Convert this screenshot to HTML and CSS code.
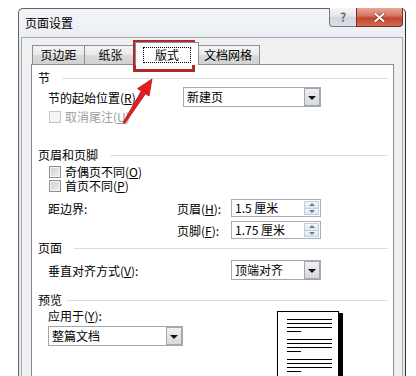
FILE: index.html
```html
<!DOCTYPE html>
<html>
<head>
    <meta charset="utf-8">
    <title>页面设置</title>
    <link rel="stylesheet" href="styles.css">
</head>
<body>
    <div class="screen">
        <div class="window">
            <div class="titlebar">
                <span class="title">页面设置</span>
                <div class="caption-buttons">
                    <span class="cap-btn help">?</span>
                    <span class="cap-btn close">
                        <svg width="11" height="9" viewBox="0 0 11 9">
                            <path d="M1.5 1 L9.5 8 M9.5 1 L1.5 8" stroke="#7a2a1e" stroke-width="3.4" stroke-linecap="round"/>
                            <path d="M1.5 1 L9.5 8 M9.5 1 L1.5 8" stroke="#fff" stroke-width="2.2" stroke-linecap="round"/>
                        </svg>
                    </span>
                </div>
            </div>

            <div class="client">
                <div class="tabs">
                    <div class="tab">页边距</div>
                    <div class="tab">纸张</div>
                    <div class="tab active"><span class="focus">版式</span></div>
                    <div class="tab">文档网格</div>
                </div>

                <div class="panel">
                    <div class="group-head">节</div>
                    <div class="row row-start">
                        <span class="label">节的起始位置(<u>R</u>)</span>
                        <div class="select select-start"><span class="value">新建页</span><span class="drop"></span></div>
                    </div>
                    <div class="check disabled check-first">
                        <span class="box"></span><span>取消尾注(<u>U</u>)</span>
                    </div>

                    <div class="group-head head-hf">页眉和页脚</div>
                    <div class="check check-odd">
                        <span class="box"></span><span>奇偶页不同(<u>O</u>)</span>
                    </div>
                    <div class="check">
                        <span class="box"></span><span>首页不同(<u>P</u>)</span>
                    </div>
                    <div class="margins">
                        <span>距边界:</span>
                        <span>页眉(<u>H</u>):</span>
                        <div class="spin"><span class="value">1.5 厘米</span><span class="arrows"><i class="up"></i><i class="down"></i></span></div>
                        <span></span>
                        <span>页脚(<u>F</u>):</span>
                        <div class="spin"><span class="value">1.75 厘米</span><span class="arrows"><i class="up"></i><i class="down"></i></span></div>
                    </div>

                    <div class="group-head head-page">页面</div>
                    <div class="row row-valign">
                        <span class="label">垂直对齐方式(<u>V</u>):</span>
                        <div class="select select-valign"><span class="value">顶端对齐</span><span class="drop"></span></div>
                    </div>

                    <div class="group-head head-preview">预览</div>
                    <div class="preview">
                        <div class="apply">
                            <div class="apply-label">应用于(<u>Y</u>):</div>
                            <div class="select select-apply"><span class="value">整篇文档</span><span class="drop"></span></div>
                        </div>
                        <div class="page">
                            <i></i><i></i><i></i><i class="short"></i>
                            <i></i><i></i><i></i><i class="short"></i>
                            <i></i><i></i><i></i><i class="short"></i>
                        </div>
                    </div>
                </div>
            </div>
        </div>

        <!-- annotation over the screenshot -->
        <div class="mark"></div>
        <svg class="arrow" width="416" height="376" viewBox="0 0 416 376">
            <polygon points="152,79 149,96 145.5,93.8 124.8,123.6 123.2,122.4 141.3,91.1 137.5,88.6" fill="#e11d1f" stroke="#b4121a" stroke-width="0.8" stroke-linejoin="round"/>
        </svg>
    </div>
</body>
</html>
```

FILE: styles.css
```css
* {
    box-sizing: border-box;
}

body {
    margin: 0;
    background-color: #fff;
    font-family: "Noto Sans CJK SC", "Noto Sans", sans-serif;
    font-size: 12px;
    color: #000;
}

u {
    text-decoration: underline;
}

.screen {
    position: relative;
    width: 416px;
    height: 376px;
    overflow: hidden;
    padding: 8px 0 0 18px;
}

.window {
    width: 388px;
    height: 400px;
    padding: 0 2px;
    border: 1px solid #5b626c;
    border-right-color: #2b2f35;
    border-bottom: none;
    border-radius: 5px 5px 0 0;
    background: linear-gradient(#f3f5f8, #e6eaef 40px);
}

.titlebar {
    height: 28px;
    display: flex;
    justify-content: space-between;
    align-items: flex-start;
}

.title {
    padding-left: 4px;
    line-height: 28px;
}

.caption-buttons {
    display: flex;
    margin-top: -1px;
}

.cap-btn {
    height: 19px;
    display: flex;
    align-items: center;
    justify-content: center;
    border: 1px solid #6f7782;
    border-top: none;
}

.help {
    width: 28px;
    border-radius: 0 0 0 4px;
    background: linear-gradient(#f6f7f9, #dfe3e8 50%, #cfd4db 51%, #dde1e6);
    color: #6b6f75;
    font-weight: bold;
    font-size: 12px;
    line-height: 14px;
}

.close {
    width: 47px;
    margin-left: -1px;
    border-color: #7a2e22;
    border-radius: 0 0 4px 0;
    background: linear-gradient(#eaa796, #d2735f 45%, #c3452e 55%, #d06a4f);
}

.client {
    height: 380px;
    padding: 4px 8px 0 9px;
    border: 1px solid #a2aab4;
    background-color: #f0f0f0;
}

.tabs {
    display: flex;
    align-items: flex-end;
    height: 22px;
    padding-left: 1px;
}

.tab {
    height: 19px;
    min-width: 53px;
    padding: 0 7px;
    border: 1px solid #8c8f96;
    border-bottom: none;
    background: linear-gradient(#f4f4f4, #e9e9e9 50%, #dadada 51%, #d2d2d2);
    line-height: 17px;
    text-align: center;
}

.tab + .tab {
    margin-left: -1px;
}

.tab.active {
    position: relative;
    z-index: 1;
    height: 23px;
    min-width: 57px;
    margin: 0 -2px -1px -2px;
    background: #fff;
    display: flex;
    align-items: center;
    justify-content: center;
    padding-top: 2px;
}

.focus {
    padding: 0 11px;
    border: 1px dotted #000;
    line-height: 14px;
}

.panel {
    height: 330px;
    padding: 0 5px 0 6px;
    border: 1px solid #898c95;
    background-color: #fff;
}

.group-head {
    display: flex;
    align-items: center;
    height: 16px;
    line-height: 16px;
    margin-top: 5px;
}

.group-head::after {
    content: "";
    flex: 1;
    height: 1px;
    margin-left: 12px;
    background-color: #dadcdf;
}

.head-hf {
    margin-top: 22px;
}

.head-page {
    margin-top: 1px;
}

.head-preview {
    margin-top: 12px;
}

.head-preview::after {
    margin-left: 5px;
}

.row {
    display: flex;
    align-items: center;
    padding-left: 10px;
}

.row-start {
    height: 20px;
    margin-top: 1px;
}

.row-start .label {
    width: 135px;
}

.row-valign {
    height: 20px;
    margin-top: 4px;
}

.row-valign .label {
    width: 183px;
}

.select {
    display: flex;
    height: 20px;
    border: 1px solid #a3a8b0;
    background-color: #fff;
}

.select .value {
    flex: 1;
    padding-left: 3px;
    line-height: 18px;
}

.select .drop {
    width: 16px;
    display: flex;
    align-items: center;
    justify-content: center;
    border: 1px solid #a4a8ae;
    background: linear-gradient(#eef0f2, #d6d9dd);
}

.select .drop::before {
    content: "";
    border-left: 4px solid transparent;
    border-right: 4px solid transparent;
    border-top: 4px solid #111;
    margin-top: 1px;
}

.select-start {
    width: 138px;
}

.select-valign {
    width: 90px;
}

.select-apply {
    width: 135px;
    margin-top: 3px;
}

.check {
    display: flex;
    align-items: center;
    height: 14px;
    padding-left: 11px;
    line-height: 14px;
}

.check-first {
    height: 16px;
    margin-top: 2px;
}

.check-odd {
    margin-top: 2px;
}

.box {
    width: 12px;
    height: 12px;
    margin-right: 4px;
    border: 1px solid #8e8f90;
    box-shadow: inset 0 0 0 1px #f4f4f4;
    background: linear-gradient(135deg, #c9ccd1, #f2f3f4);
}

.check.disabled {
    color: #9d9d9d;
}

.check.disabled .box {
    border-color: #c5c5c5;
    background: #f4f4f4;
}

.margins {
    display: grid;
    grid-template-columns: 129px 54px 90px;
    grid-auto-rows: 18px;
    row-gap: 4px;
    align-items: center;
    margin-top: 6px;
    padding-left: 10px;
}

.spin {
    display: flex;
    height: 18px;
    padding: 1px;
    border: 1px solid #abadb3;
    background-color: #fff;
}

.spin .value {
    flex: 1;
    padding-left: 2px;
    line-height: 14px;
}

.spin .arrows {
    width: 15px;
    display: flex;
    flex-direction: column;
}

.arrows i {
    flex: 1;
    display: flex;
    align-items: center;
    justify-content: center;
    border: 1px solid #c4cfdc;
    background: linear-gradient(#f4f7fb, #dfe7f1);
}

.arrows i + i {
    border-top: none;
}

.arrows i::before {
    content: "";
    border-left: 3px solid transparent;
    border-right: 3px solid transparent;
}

.arrows .up::before {
    border-bottom: 3px solid #6a7a90;
}

.arrows .down::before {
    border-top: 3px solid #6a7a90;
}

.preview {
    display: flex;
    align-items: flex-start;
    padding-left: 10px;
}

.apply {
    width: 135px;
}

.apply-label {
    line-height: 15px;
}

.page {
    width: 62px;
    height: 80px;
    margin: 3px 0 0 94px;
    padding: 7px 0 0 9px;
    border: 1px solid #000;
    background-color: #fff;
    box-shadow: 4px 2px 0 #000;
}

.page i {
    display: block;
    width: 45px;
    height: 1px;
    margin-bottom: 3px;
    background-color: #000;
}

.page i.short {
    width: 14px;
    margin-bottom: 7px;
}

.mark {
    position: absolute;
    left: 133px;
    top: 40px;
    width: 62px;
    height: 32px;
    border: 3px solid #b3272c;
}

.arrow {
    position: absolute;
    left: 0;
    top: 0;
    pointer-events: none;
}
```
